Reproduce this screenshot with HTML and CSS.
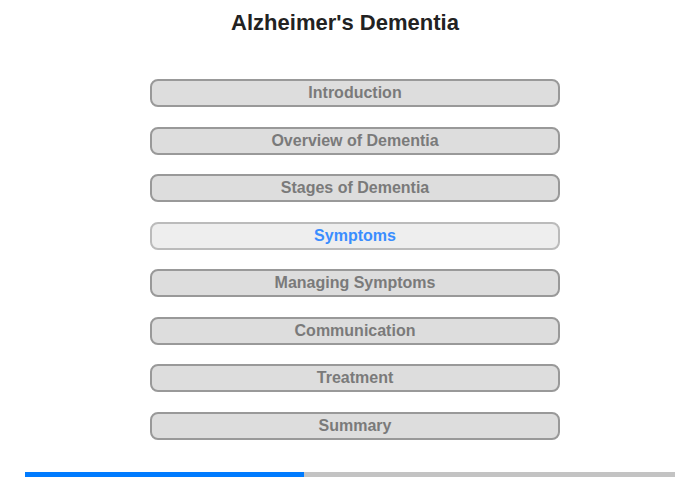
FILE: index.html
```html
<!DOCTYPE html>
<html lang="en">

<head>
    <meta charset="UTF-8">
    <meta name="viewport" content="width=device-width, initial-scale=1.0">
    <title>Alzheimer's Dementia</title>
    <link rel="stylesheet" href="styles.css">
</head>

<body>

    <main>
        <h1 class="title">Alzheimer's Dementia</h1>
        <nav class="menu">
            <a class="menu-item" href="#">Introduction</a>
            <a class="menu-item" href="#">Overview of Dementia</a>
            <a class="menu-item" href="#">Stages of Dementia</a>
            <a class="menu-item active" href="#">Symptoms</a>
            <a class="menu-item" href="#">Managing Symptoms</a>
            <a class="menu-item" href="#">Communication</a>
            <a class="menu-item" href="#">Treatment</a>
            <a class="menu-item" href="#">Summary</a>
        </nav>
        <div class="progress">
            <div class="progress-bar" style="width: 42.86%"></div>
        </div>
    </main>

</body>

</html>
```

FILE: styles.css
```css
body {
    font-family: "Liberation Sans", Arial, Helvetica, sans-serif;
    background-color: #fff;
    margin: 0;
}

main {
    padding: 11px 25px 0;
}

.title {
    font-size: 22px;
    line-height: 24px;
    font-weight: bold;
    color: #222;
    text-align: center;
    margin: 0 10px 44px 0;
}

.menu {
    display: flex;
    flex-direction: column;
    gap: 19.5px;
    width: 410px;
    margin-left: 125px;
}

.menu-item {
    display: block;
    box-sizing: border-box;
    height: 28px;
    line-height: 24px;
    border: 2px solid #999;
    border-radius: 8px;
    background-color: #ddd;
    color: #7a7a7a;
    font-size: 16px;
    font-weight: bold;
    text-align: center;
    text-decoration: none;
}

.menu-item.active {
    background-color: #eee;
    border-color: #bbb;
    color: #3a8dff;
}

.progress {
    height: 5px;
    margin-top: 32px;
    background-color: #c3c3c3;
}

.progress-bar {
    height: 100%;
    background-color: #007bff;
}
```
